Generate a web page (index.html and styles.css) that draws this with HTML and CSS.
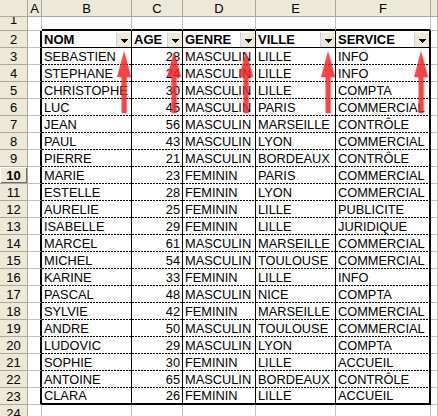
FILE: index.html
```html
<!DOCTYPE html>
<html lang="fr">
<head>
<meta charset="utf-8">
<title>Filtre automatique</title>
<link rel="stylesheet" href="styles.css">
</head>
<body>
<div class="sheet">
  <div class="row colhdr">
    <div class="cell"></div><div class="cell">A</div><div class="cell">B</div><div class="cell">C</div><div class="cell">D</div><div class="cell">E</div><div class="cell">F</div><div class="cell"></div>
  </div>
  <div class="row r1">
    <div class="cell rh"><span class="clip">1</span></div><div class="cell"></div><div class="cell top"></div><div class="cell top"></div><div class="cell top"></div><div class="cell top"></div><div class="cell top"></div><div class="cell"></div>
  </div>
  <div class="row">
    <div class="cell rh">2</div><div class="cell ta"></div>
    <div class="cell h"><span class="lbl">NOM</span><span class="dd"><svg width="7" height="4" viewBox="0 0 7 4"><path d="M0 0h7v1H0zM1 1h5v1H1zM2 2h3v1H2zM3 3h1v1H3z"/></svg></span></div>
    <div class="cell h"><span class="lbl">AGE</span><span class="dd"><svg width="7" height="4" viewBox="0 0 7 4"><path d="M0 0h7v1H0zM1 1h5v1H1zM2 2h3v1H2zM3 3h1v1H3z"/></svg></span></div>
    <div class="cell h"><span class="lbl">GENRE</span><span class="dd"><svg width="7" height="4" viewBox="0 0 7 4"><path d="M0 0h7v1H0zM1 1h5v1H1zM2 2h3v1H2zM3 3h1v1H3z"/></svg></span></div>
    <div class="cell h"><span class="lbl">VILLE</span><span class="dd"><svg width="7" height="4" viewBox="0 0 7 4"><path d="M0 0h7v1H0zM1 1h5v1H1zM2 2h3v1H2zM3 3h1v1H3z"/></svg></span></div>
    <div class="cell h last"><span class="lbl">SERVICE</span><span class="dd"><svg width="7" height="4" viewBox="0 0 7 4"><path d="M0 0h7v1H0zM1 1h5v1H1zM2 2h3v1H2zM3 3h1v1H3z"/></svg></span></div>
    <div class="cell"></div>
  </div>
  <div class="row"><div class="cell rh">3</div><div class="cell ta"></div><div class="cell t">SEBASTIEN</div><div class="cell t n">28</div><div class="cell t">MASCULIN</div><div class="cell t">LILLE</div><div class="cell t last">INFO</div><div class="cell"></div></div>
  <div class="row"><div class="cell rh">4</div><div class="cell ta"></div><div class="cell t">STEPHANE</div><div class="cell t n">24</div><div class="cell t">MASCULIN</div><div class="cell t">LILLE</div><div class="cell t last">INFO</div><div class="cell"></div></div>
  <div class="row"><div class="cell rh">5</div><div class="cell ta"></div><div class="cell t">CHRISTOPHE</div><div class="cell t n">30</div><div class="cell t">MASCULIN</div><div class="cell t">LILLE</div><div class="cell t last">COMPTA</div><div class="cell"></div></div>
  <div class="row"><div class="cell rh">6</div><div class="cell ta"></div><div class="cell t">LUC</div><div class="cell t n">45</div><div class="cell t">MASCULIN</div><div class="cell t">PARIS</div><div class="cell t last">COMMERCIAL</div><div class="cell"></div></div>
  <div class="row"><div class="cell rh">7</div><div class="cell ta"></div><div class="cell t">JEAN</div><div class="cell t n">56</div><div class="cell t">MASCULIN</div><div class="cell t">MARSEILLE</div><div class="cell t last">CONTRÔLE</div><div class="cell"></div></div>
  <div class="row"><div class="cell rh">8</div><div class="cell ta"></div><div class="cell t">PAUL</div><div class="cell t n">43</div><div class="cell t">MASCULIN</div><div class="cell t">LYON</div><div class="cell t last">COMMERCIAL</div><div class="cell"></div></div>
  <div class="row"><div class="cell rh">9</div><div class="cell ta"></div><div class="cell t">PIERRE</div><div class="cell t n">21</div><div class="cell t">MASCULIN</div><div class="cell t">BORDEAUX</div><div class="cell t last">CONTRÔLE</div><div class="cell"></div></div>
  <div class="row"><div class="cell rh act">10</div><div class="cell ta"></div><div class="cell t">MARIE</div><div class="cell t n">23</div><div class="cell t">FEMININ</div><div class="cell t">PARIS</div><div class="cell t last">COMMERCIAL</div><div class="cell"></div></div>
  <div class="row"><div class="cell rh">11</div><div class="cell ta"></div><div class="cell t">ESTELLE</div><div class="cell t n">28</div><div class="cell t">FEMININ</div><div class="cell t">LYON</div><div class="cell t last">COMMERCIAL</div><div class="cell"></div></div>
  <div class="row"><div class="cell rh">12</div><div class="cell ta"></div><div class="cell t">AURELIE</div><div class="cell t n">25</div><div class="cell t">FEMININ</div><div class="cell t">LILLE</div><div class="cell t last">PUBLICITE</div><div class="cell"></div></div>
  <div class="row"><div class="cell rh">13</div><div class="cell ta"></div><div class="cell t">ISABELLE</div><div class="cell t n">29</div><div class="cell t">FEMININ</div><div class="cell t">LILLE</div><div class="cell t last">JURIDIQUE</div><div class="cell"></div></div>
  <div class="row"><div class="cell rh">14</div><div class="cell ta"></div><div class="cell t">MARCEL</div><div class="cell t n">61</div><div class="cell t">MASCULIN</div><div class="cell t">MARSEILLE</div><div class="cell t last">COMMERCIAL</div><div class="cell"></div></div>
  <div class="row"><div class="cell rh">15</div><div class="cell ta"></div><div class="cell t">MICHEL</div><div class="cell t n">54</div><div class="cell t">MASCULIN</div><div class="cell t">TOULOUSE</div><div class="cell t last">COMMERCIAL</div><div class="cell"></div></div>
  <div class="row"><div class="cell rh">16</div><div class="cell ta"></div><div class="cell t">KARINE</div><div class="cell t n">33</div><div class="cell t">FEMININ</div><div class="cell t">LILLE</div><div class="cell t last">INFO</div><div class="cell"></div></div>
  <div class="row"><div class="cell rh">17</div><div class="cell ta"></div><div class="cell t">PASCAL</div><div class="cell t n">48</div><div class="cell t">MASCULIN</div><div class="cell t">NICE</div><div class="cell t last">COMPTA</div><div class="cell"></div></div>
  <div class="row"><div class="cell rh">18</div><div class="cell ta"></div><div class="cell t">SYLVIE</div><div class="cell t n">42</div><div class="cell t">FEMININ</div><div class="cell t">MARSEILLE</div><div class="cell t last">COMMERCIAL</div><div class="cell"></div></div>
  <div class="row"><div class="cell rh">19</div><div class="cell ta"></div><div class="cell t">ANDRE</div><div class="cell t n">50</div><div class="cell t">MASCULIN</div><div class="cell t">TOULOUSE</div><div class="cell t last">COMMERCIAL</div><div class="cell"></div></div>
  <div class="row"><div class="cell rh">20</div><div class="cell ta"></div><div class="cell t">LUDOVIC</div><div class="cell t n">29</div><div class="cell t">MASCULIN</div><div class="cell t">LYON</div><div class="cell t last">COMPTA</div><div class="cell"></div></div>
  <div class="row"><div class="cell rh">21</div><div class="cell ta"></div><div class="cell t">SOPHIE</div><div class="cell t n">30</div><div class="cell t">FEMININ</div><div class="cell t">LILLE</div><div class="cell t last">ACCUEIL</div><div class="cell"></div></div>
  <div class="row"><div class="cell rh">22</div><div class="cell ta"></div><div class="cell t">ANTOINE</div><div class="cell t n">65</div><div class="cell t">MASCULIN</div><div class="cell t">BORDEAUX</div><div class="cell t last">CONTRÔLE</div><div class="cell"></div></div>
  <div class="row"><div class="cell rh">23</div><div class="cell ta"></div><div class="cell t bot">CLARA</div><div class="cell t n bot">26</div><div class="cell t bot">FEMININ</div><div class="cell t bot">LILLE</div><div class="cell t last bot">ACCUEIL</div><div class="cell"></div></div>
  <div class="row"><div class="cell rh">24</div><div class="cell"></div><div class="cell"></div><div class="cell"></div><div class="cell"></div><div class="cell"></div><div class="cell"></div><div class="cell"></div></div>

  <svg class="arrow a1" width="16" height="63" viewBox="0 0 16 63"><path d="M8 0L15 26H10.5V62H5.5V26H1Z"/></svg>
  <svg class="arrow a2" width="16" height="63" viewBox="0 0 16 63"><path d="M8 0L15 26H10.5V62H5.5V26H1Z"/></svg>
  <svg class="arrow a3" width="16" height="63" viewBox="0 0 16 63"><path d="M8 0L15 26H10.5V62H5.5V26H1Z"/></svg>
  <svg class="arrow a4" width="16" height="63" viewBox="0 0 16 63"><path d="M8 0L15 26H10.5V62H5.5V26H1Z"/></svg>
  <svg class="arrow a5" width="16" height="63" viewBox="0 0 16 63"><path d="M8 0L15 26H10.5V62H5.5V26H1Z"/></svg>
</div>
</body>
</html>
```

FILE: styles.css
```css
* { box-sizing: border-box; margin: 0; padding: 0; }
html, body { width: 438px; height: 416px; overflow: hidden; background: #fff; }
body { font: 12.8px "Liberation Sans", Arial, sans-serif; color: #000; }

.sheet { position: relative; width: 438px; height: 416px; overflow: hidden; }

.row {
  display: grid;
  grid-template-columns: 28px 14px 90px 51px 73px 80px 95px 1fr;
  height: 17px;
}
.row.r1 { height: 14px; }

.cell {
  display: flex;
  align-items: flex-end;
  min-width: 0;
  overflow: hidden;
  white-space: nowrap;
  line-height: 15px;
  padding: 0 2px;
  border-right: 1px solid #c0c0c0;
  border-bottom: 1px solid #c0c0c0;
}

/* headers */
.colhdr .cell, .rh {
  background: #ece9d8;
  border-right-color: #aca899;
  border-bottom-color: #aca899;
  justify-content: center;
  align-items: center;
  padding: 0;
  font-size: 13px;
}
.rh.act {
  font-weight: bold;
  box-shadow: inset 1px 1px 0 #fff, inset -1px -1px 0 #716f64;
}
.r1 .rh { align-items: flex-start; }
.clip { margin-top: -5px; }

/* table borders */
.top { border-bottom: 2px solid #000; }
.ta { border-right: 2px solid #000; }

.t {
  border-right: 1px solid #000;
  border-bottom: 0;
  padding-bottom: 1px;
  background: repeating-linear-gradient(90deg, #000 0 2px, transparent 2px 3px) left bottom / 100% 1px no-repeat;
}
.t.n { justify-content: flex-end; }
.t.bot { border-bottom: 2px solid #000; padding-bottom: 0; background: none; }
.last { border-right: 2px solid #000; }

.h {
  border-right: 1px solid #000;
  border-bottom: 1px solid #000;
  justify-content: space-between;
  padding-right: 0;
  font-weight: bold;
  font-size: 13px;
}
.h.last { border-right: 2px solid #000; }
.lbl { overflow: hidden; }

.dd {
  flex: none;
  width: 15px;
  height: 15px;
  background: #ece9d8;
  border-left: 1px solid #c3d0ee;
  border-top: 1px solid #f7f6f1;
  display: flex;
  align-items: center;
  justify-content: center;
  padding-top: 2px;
}
.dd svg { display: block; fill: #000; }

/* annotation arrows */
.arrow {
  position: absolute;
  top: 51px;
  filter: drop-shadow(1px 1px 1px rgba(0, 0, 0, 0.35));
}
.arrow path { fill: rgba(255, 40, 40, 0.8); }
.a1 { left: 116px; }
.a2 { left: 166px; }
.a3 { left: 238px; }
.a4 { left: 320px; }
.a5 { left: 413px; }
```
